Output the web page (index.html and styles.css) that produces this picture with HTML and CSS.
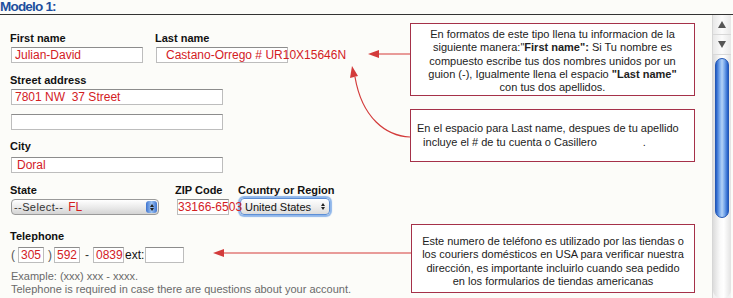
FILE: index.html
```html
<!DOCTYPE html>
<html lang="es">
<head>
    <meta charset="UTF-8">
    <title>Modelo 1</title>
    <link rel="stylesheet" href="styles.css">
</head>
<body>
    <h1 class="title">Modelo 1:</h1>
    <div class="main">
        <div class="form">
            <div class="row row-name">
                <div class="field field-first">
                    <div class="label">First name</div>
                    <div class="box w-name pad-first">Julian-David</div>
                </div>
                <div class="field">
                    <div class="label">Last name</div>
                    <div class="box w-name pad-last">Castano-Orrego # UR10X15646N</div>
                </div>
            </div>

            <div class="row row-street">
                <div class="field">
                    <div class="label">Street address</div>
                    <div class="box w-wide">7801 NW &nbsp;37 Street</div>
                    <div class="box w-wide box-second"></div>
                </div>
            </div>

            <div class="row row-city">
                <div class="field">
                    <div class="label label-city">City</div>
                    <div class="box w-wide pad-city">Doral</div>
                </div>
            </div>

            <div class="row row-state">
                <div class="field field-state">
                    <div class="label">State</div>
                    <div class="select select-state">
                        <span class="select-text">--Select--</span>
                        <span class="select-value">FL</span>
                        <span class="select-btn blue"><i class="up"></i><i class="down"></i></span>
                    </div>
                </div>
                <div class="field field-zip">
                    <div class="label">ZIP Code</div>
                    <div class="box w-zip pad-zip">33166-6503</div>
                </div>
                <div class="field field-country">
                    <div class="label">Country or Region</div>
                    <div class="select select-country">
                        <span class="select-text">United States</span>
                        <span class="select-btn"><i class="up"></i><i class="down"></i></span>
                    </div>
                </div>
            </div>

            <div class="row row-tel">
                <div class="field">
                    <div class="label label-tel">Telephone</div>
                    <div class="phone">
                        <span class="paren">(</span>
                        <div class="box w-area">305</div>
                        <span class="paren close">)</span>
                        <div class="box w-area">592</div>
                        <span class="dash">-</span>
                        <div class="box w-line">0839</div>
                        <span class="ext">ext:</span>
                        <div class="box w-ext"></div>
                    </div>
                </div>
            </div>

            <p class="hint">Example: (xxx) xxx - xxxx.<br>Telephone is required in case there are questions about your account.</p>
        </div>

        <div class="notes">
            <div class="note note-names">
                En formatos de este tipo llena tu informacion de la<br>
                siguiente manera:"<b>First name":</b> Si Tu nombre es<br>
                compuesto escribe tus dos nombres unidos por un<br>
                guion (-), Igualmente llena el espacio <b>"Last name"</b><br>
                con tus dos apellidos.
            </div>
            <div class="note note-account">
                En el espacio para Last name, despues de tu apellido<br>
                &nbsp;&nbsp;incluye el # de tu cuenta o Casillero<span class="dot">.</span>
            </div>
            <div class="note note-phone">
                Este numero de teléfono es utilizado por las tiendas o<br>
                los couriers domésticos en USA para verificar nuestra<br>
                dirección, es importante incluirlo cuando sea pedido<br>
                en los formularios de tiendas americanas
            </div>
        </div>

        <div class="scrollbar">
            <div class="sb-btn"><i class="sb-up"></i></div>
            <div class="sb-btn"><i class="sb-down"></i></div>
            <div class="sb-track">
                <div class="sb-thumb"></div>
            </div>
        </div>
    </div>

    <!-- flechas de las notas -->
    <svg class="arrows" width="733" height="298" viewBox="0 0 733 298">
        <g stroke="#d33b3b" stroke-width="1.2" fill="none">
            <line x1="410" y1="54" x2="376" y2="54"/>
            <path d="M410 137 C 386 136 362 118 355 77"/>
            <line x1="411" y1="253" x2="221" y2="253"/>
        </g>
        <g fill="#d33b3b">
            <polygon points="368,54 379,50 379,58"/>
            <polygon points="352,66 350,78 358,76"/>
            <polygon points="213,253 224,249 224,257"/>
        </g>
    </svg>
</body>
</html>
```

FILE: styles.css
```css
body {
    margin: 0;
    width: 733px;
    height: 298px;
    overflow: hidden;
    position: relative;
    background: #fcfcf9;
    font-family: 'Liberation Sans', Arial, sans-serif;
    color: #222222;
}
.title {
    margin: 0;
    font-size: 13.5px;
    line-height: 14px;
    font-weight: bold;
    letter-spacing: -0.8px;
    color: #1d4f9e;
    border-bottom: 1px solid #333333;
}
.main {
    display: flex;
}
.form {
    width: 400px;
    padding-left: 10px;
}
.row {
    display: flex;
}
.row-name {
    margin-top: 17px;
}
.row-street {
    margin-top: 11px;
}
.row-city {
    margin-top: 10px;
}
.row-state {
    margin-top: 11px;
}
.row-tel {
    margin-top: 15px;
}
.field-first {
    width: 145px;
}
.field-state {
    width: 165px;
}
.field-zip {
    width: 63px;
}
.label {
    font-size: 11px;
    line-height: 13px;
    font-weight: bold;
    color: #111111;
    margin-bottom: 2px;
}
.label-city,
.label-tel {
    margin-bottom: 4px;
}
.box {
    box-sizing: border-box;
    height: 16px;
    margin-left: 1px;
    padding: 0 3px;
    background: #ffffff;
    border: 1px solid #bdbdbd;
    border-top-color: #8c8c8c;
    color: #d3201f;
    font-size: 12px;
    line-height: 14px;
    white-space: nowrap;
}
.w-name {
    width: 132px;
}
.pad-last {
    padding-left: 9px;
}
.pad-city {
    padding-left: 5px;
}
.pad-zip {
    padding-left: 0;
    position: relative;
    z-index: 2;
}
.w-wide {
    width: 212px;
}
.box-second {
    margin-top: 9px;
}
.w-zip {
    width: 52px;
    margin-left: 2px;
}
.select {
    box-sizing: border-box;
    height: 16px;
    display: flex;
    align-items: center;
    position: relative;
    font-size: 11px;
    color: #333333;
    border-radius: 4px;
    white-space: nowrap;
}
.select-state {
    width: 148px;
    margin-left: 1px;
    border: 1px solid #9a9a9a;
    background: linear-gradient(#ffffff, #e9e9e9 55%, #d4d4d4);
}
.select-state .select-text {
    padding-left: 2px;
    letter-spacing: 0.4px;
}
.select-value {
    margin-left: 5px;
    color: #d3201f;
    font-size: 12px;
}
.select-country {
    width: 90px;
    height: 17px;
    margin-left: 2px;
    margin-top: -1px;
    border: 1px solid #5d8fd6;
    background: linear-gradient(#ffffff, #eeeeee 55%, #dcdcdc);
    box-shadow: 0 0 1px 2px #8fb6ea;
    color: #111111;
}
.select-country .select-text {
    padding-left: 4px;
}
.select-btn {
    position: absolute;
    right: 1px;
    top: 1px;
    bottom: 1px;
    width: 11px;
    display: flex;
    flex-direction: column;
    align-items: center;
    justify-content: center;
    gap: 1px;
    border-radius: 3px;
}
.select-btn.blue {
    background: linear-gradient(90deg, #3d73cf, #9cc2f2, #3d73cf);
}
.select-btn i {
    width: 0;
    height: 0;
    border-left: 2px solid transparent;
    border-right: 2px solid transparent;
}
.select-btn .up {
    border-bottom: 3px solid #222222;
}
.select-btn .down {
    border-top: 3px solid #222222;
}
.phone {
    display: flex;
    align-items: center;
    font-size: 12px;
    color: #555555;
}
.paren {
    margin-left: 1px;
    width: 6px;
}
.paren.close {
    margin-left: 4px;
    width: 5px;
}
.dash {
    margin-left: 5px;
    width: 7px;
    color: #333333;
}
.w-area {
    width: 26px;
    padding-left: 2px;
}
.w-line {
    width: 31px;
    padding-left: 2px;
}
.ext {
    margin-left: 1px;
    width: 19px;
    color: #111111;
}
.w-ext {
    width: 39px;
}
.hint {
    margin: 7px 0 0 1px;
    font-size: 11px;
    line-height: 13px;
    color: #6a6a6a;
    white-space: nowrap;
}
.notes {
    width: 285px;
    padding-top: 8px;
}
.note {
    box-sizing: border-box;
    border: 1px solid #a53149;
    background: #ffffff;
    font-size: 11px;
    line-height: 13.3px;
    color: #222222;
    white-space: nowrap;
}
.note-names {
    height: 73px;
    padding: 4px 4px 0;
    text-align: center;
}
.note-account {
    height: 53px;
    margin-top: 13px;
    padding: 11px 6px 0;
    line-height: 14px;
}
.dot {
    margin-left: 46px;
}
.note-phone {
    height: 69px;
    margin-top: 62px;
    margin-left: 1px;
    padding: 10px 4px 0;
    text-align: center;
}
.scrollbar {
    width: 18px;
    height: 283px;
    margin-left: 17px;
    display: flex;
    flex-direction: column;
    background: #f2f2f2;
    border-left: 1px solid #d6d6d6;
}
.sb-btn {
    height: 19px;
    display: flex;
    align-items: center;
    justify-content: center;
    border-bottom: 1px solid #d8d8d8;
    background: linear-gradient(90deg, #e8e8e8, #fbfbfb 50%, #e8e8e8);
}
.sb-up {
    border-left: 4px solid transparent;
    border-right: 4px solid transparent;
    border-bottom: 7px solid #555555;
}
.sb-down {
    border-left: 4px solid transparent;
    border-right: 4px solid transparent;
    border-top: 7px solid #555555;
}
.sb-track {
    flex: 1;
    padding-top: 3px;
    border-radius: 0 0 8px 8px;
    background: linear-gradient(90deg, #dcdcdc, #fafafa 40%, #ffffff 60%, #e2e2e2);
}
.sb-thumb {
    box-sizing: border-box;
    height: 160px;
    margin: 0 2px;
    border-radius: 7px;
    border: 1px solid #2457b4;
    background: linear-gradient(90deg, #1f5bc6, #79a9ec 30%, #b3d2f7 50%, #79a9ec 70%, #1f5bc6);
}
.arrows {
    position: absolute;
    left: 0;
    top: 0;
    pointer-events: none;
}
```
